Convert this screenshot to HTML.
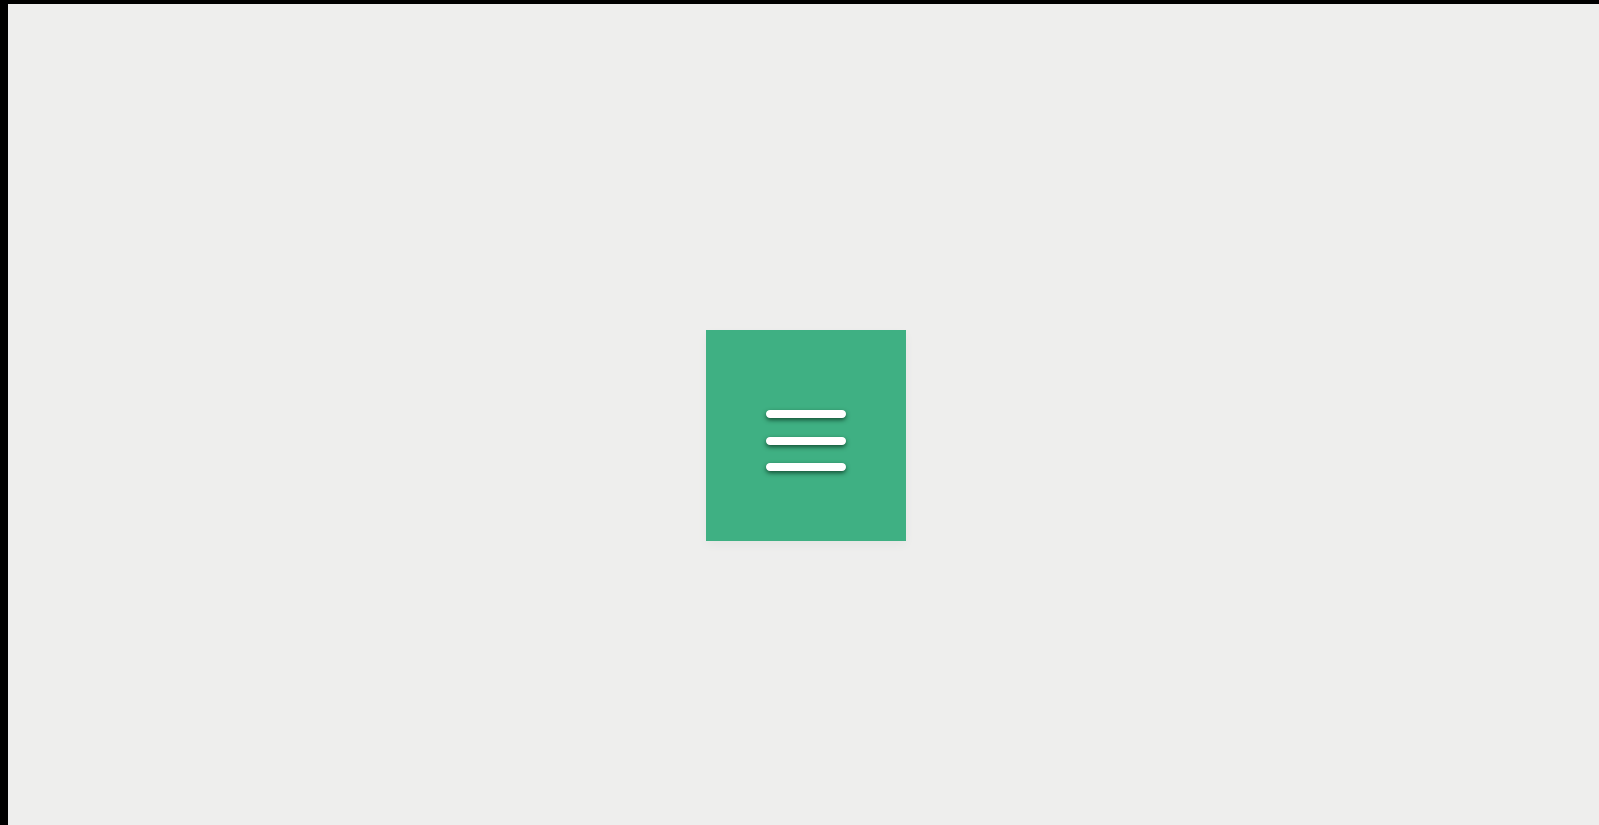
<!DOCTYPE html>
<html><head><style>
html,body{margin:0;padding:0;width:1599px;height:825px;overflow:hidden;background:#000;}
.bg{position:absolute;left:8px;top:4px;right:0;bottom:0;background:#eeeeed;}
.sq{position:absolute;left:706px;top:330px;width:200px;height:211px;background:#3fb083;box-shadow:0 4px 10px rgba(0,0,0,0.04);}
.l{position:absolute;left:766px;width:80px;height:8px;border-radius:4px;background:#fff;box-shadow:0 2px 5px rgba(0,40,20,0.7);}
</style></head><body>
<div class="bg"></div>
<div class="sq"></div>
<div class="l" style="top:410px"></div>
<div class="l" style="top:437px"></div>
<div class="l" style="top:463px"></div>
</body></html>
